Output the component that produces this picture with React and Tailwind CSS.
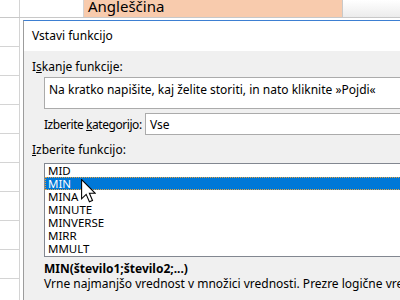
import React from "react";

const FONT = { fontFamily: '"Noto Sans", "Liberation Sans", sans-serif' };

function Cursor() {
  return (
    <svg
      className="absolute"
      style={{ left: 81, top: 179 }}
      width="15"
      height="24"
      viewBox="0 0 12.5 20"
    >
      <path
        d="M0.5 0.5 L0.5 16.5 L4.3 12.8 L7 19 L9.6 17.9 L7 11.9 L11.9 11.9 Z"
        fill="#ffffff"
        stroke="#000000"
        strokeWidth="0.9"
        strokeLinejoin="miter"
      />
    </svg>
  );
}

export default function App() {
  const items = ["MID", "MIN", "MINA", "MINUTE", "MINVERSE", "MIRR", "MMULT"];
  return (
    <div
      className="relative w-[400px] h-[300px] overflow-hidden bg-white text-black"
      style={FONT}
    >
      {/* spreadsheet background */}
      <div className="flex h-[18px] border-b border-[#c8c8c8]">
        <div className="w-[20px] border-r border-[#d4d4d4]" />
        <div className="w-[64px] border-r border-[#d4d4d4]" />
        <div className="w-[259px] bg-[#f8cbad] border-r border-[#c9c9c9] overflow-hidden">
          <div className="pl-[4px] text-[15px] leading-[16px] -mt-[2px] whitespace-nowrap">Angleščina</div>
        </div>
        <div className="flex-1 bg-gradient-to-b from-white to-[#ececec]" />
      </div>
      <div className="flex flex-col w-[20px] border-r border-[#d4d4d4]">
        {Array.from({ length: 10 }).map((_, i) => (
          <div key={i} className="h-[29px] border-b border-[#d4d4d4]" />
        ))}
      </div>

      {/* dialog */}
      <div className="absolute left-[23px] top-[20px] right-[-20px] bottom-[-20px] border-t border-l border-t-[#3d7fd2] border-l-[#9c9c9c] bg-[#f0f0f0] flex flex-col">
        <div className="h-[30px] bg-white flex items-center pl-[8px] text-[12px]">
          Vstavi funkcijo
        </div>
        <div className="flex flex-col text-[12px] leading-[15px]">
          <div className="pl-[8px] mt-[8px]">
            I<span className="underline">s</span>kanje funkcije:
          </div>
          <div className="ml-[20px] mt-[3px] h-[32px] bg-white border border-[#ababab] pl-[4px] pt-[4px] whitespace-nowrap">
            Na kratko napišite, kaj želite storiti, in nato kliknite »Pojdi«
          </div>
          <div className="flex items-center mt-[4px] h-[22px]">
            <div className="pl-[20px] w-[121px] shrink-0 whitespace-nowrap tracking-[-0.45px]">
              Izberite <span className="underline">k</span>ategorijo:
            </div>
            <div className="flex-1 h-[22px] bg-white border border-[#ababab] pl-[4px] flex items-center">
              Vse
            </div>
          </div>
          <div className="pl-[8px] mt-[7px]">
            <span className="underline">I</span>zberite funkcijo:
          </div>
          <div className="ml-[20px] mt-[6px] h-[94px] bg-white border border-[#828790] flex flex-col">
            {items.map((it) => (
              <div
                key={it}
                className={
                  "h-[13px] leading-[13px] text-[11.5px] pl-[3px] " +
                  (it === "MIN"
                    ? "bg-[#0078d7] text-white outline outline-1 outline-dotted outline-[#e8a33c] -outline-offset-1"
                    : "")
                }
              >
                {it}
              </div>
            ))}
          </div>
          <div className="ml-[20px] mt-[4px] font-bold whitespace-nowrap">
            MIN(število1;število2;...)
          </div>
          <div className="ml-[20px] whitespace-nowrap">
            Vrne najmanjšo vrednost v množici vrednosti. Prezre logične vrednosti in besedilo.
          </div>
        </div>
      </div>
      <Cursor />
    </div>
  );
}
